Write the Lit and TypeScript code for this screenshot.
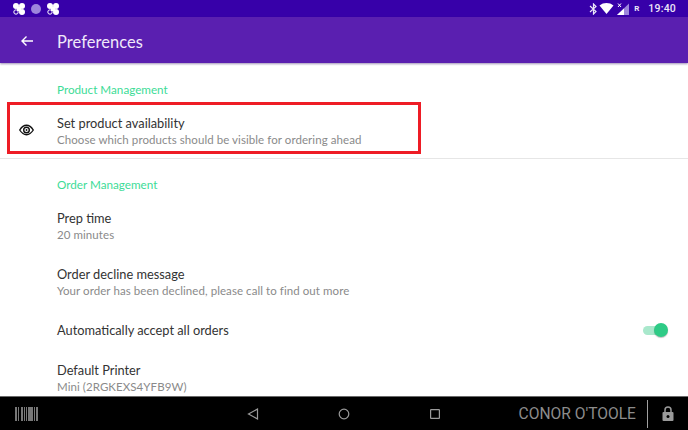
import { LitElement, html, css, svg } from 'lit';
import { customElement } from 'lit/decorators.js';

const clover = svg`<g fill="#fff"><circle cx="4" cy="4" r="3"/><circle cx="10" cy="4" r="3"/><circle cx="10" cy="10" r="3"/><circle cx="4" cy="10" r="2.2" fill="none" stroke="#fff" stroke-width="1"/><rect x="5" y="5" width="4" height="4"/></g>`;

@customElement('app-root')
export class AppRoot extends LitElement {
  static styles = css`
    :host {
      display: block;
      width: 688px;
      height: 430px;
      font-family: Lato, "Noto Sans", sans-serif;
      overflow: hidden;
      background: #fff;
    }
    .page { display: flex; flex-direction: column; height: 430px; }

    .status {
      height: 17px;
      background: #3700a9;
      display: flex;
      align-items: center;
      padding: 0 12px;
      color: #ece6f8;
      flex: none;
    }
    .status-left { display: flex; align-items: center; gap: 4px; flex: 1; }
    .status-right { display: flex; align-items: center; }
    .clock { font: 500 10.5px Roboto, sans-serif; margin-left: 9px; letter-spacing: 0.2px; }
    .roam { font: 700 8px Roboto, sans-serif; margin-left: 5px; }

    .toolbar {
      height: 46px;
      background: #5a1fb0;
      display: flex;
      align-items: center;
      flex: none;
      box-shadow: 0 1px 2px rgba(40, 10, 90, 0.45);
      position: relative;
      color: #f0e9fa;
      padding-top: 2px;
      box-sizing: border-box;
    }
    .back { width: 57px; display: flex; justify-content: center; padding-right: 4px; box-sizing: border-box; flex: none; }
    .title { font-size: 16.4px; letter-spacing: 0.1px; }

    .content { flex: 1; overflow: hidden; position: relative; min-height: 0; }
    .header {
      height: 39px;
      padding: 11px 0 0 57px;
      box-sizing: border-box;
      display: flex;
      align-items: center;
      color: #3ddc97;
      font-size: 11.7px;
    }
    .header.first { height: 41px; }
    .row {
      display: flex;
      align-items: center;
      height: 56px;
      box-sizing: border-box;
      flex: none;
    }
    .row.short { height: 40px; }
    .row.top { height: 54px; }
    .row-icon { width: 57px; display: flex; justify-content: center; padding: 0 5px 2px 0; box-sizing: border-box; flex: none; }
    .row-text { flex: 1; display: flex; flex-direction: column; gap: 2px; }
    .name { font-size: 12.8px; color: #333; line-height: 16px; }
    .desc { font-size: 11.5px; color: #8a8a8a; line-height: 14px; letter-spacing: 0.07px; }
    .divider { height: 1px; background: #e6e6e6; }

    .toggle { position: relative; width: 26px; height: 14px; margin-right: 20px; flex: none; }
    .track { position: absolute; left: 1px; top: 3px; width: 22px; height: 9px; border-radius: 5px; background: #a9e8cc; }
    .thumb { position: absolute; right: 0; top: 0; width: 14px; height: 14px; border-radius: 50%; background: #2ecb86; box-shadow: 0 1px 1px rgba(0,0,0,.25); }

    .highlight {
      position: absolute;
      left: 7px;
      top: 39px;
      width: 414px;
      height: 52px;
      box-sizing: border-box;
      border: 3px solid #ee1c25;
      pointer-events: none;
    }

    .nav {
      height: 34px;
      background: #000;
      flex: none;
      display: flex;
      align-items: center;
      border-top: 1px solid #6a6a6a;
      box-sizing: border-box;
      position: relative;
      color: #8c8c8c;
    }
    .barcode { margin-left: 15px; width: 228px; flex: none; display: flex; }
    .softkeys { display: flex; align-items: center; gap: 71px; flex: none; width: 260px; }
    .user { flex: 1; font: 400 15.6px Roboto, sans-serif; text-align: right; white-space: nowrap; }
    .sep { width: 1px; height: 28px; background: #a0a0a0; margin: 0 14px 0 11px; flex: none; }
    .lock { margin-right: 14px; display: flex; }
  `;

  render() {
    return html`
      <div class="page">
        <div class="status">
          <div class="status-left">
            <svg width="14" height="14" viewBox="0 0 14 14">${clover}</svg>
            <svg width="12" height="14" viewBox="0 0 12 14"><circle cx="6" cy="7" r="5" fill="#9d86dc"/></svg>
            <svg width="14" height="14" viewBox="0 0 14 14">${clover}</svg>
          </div>
          <div class="status-right">
            <svg width="9" height="12" viewBox="0 0 9 12" fill="none" stroke="#ece6f8" stroke-width="1.2"><path d="M1 3l6 5.500L4.500 11V1L7 3.500 1 9"/></svg>
            <svg width="15" height="11" viewBox="0 0 15 11" style="margin-left:1px"><path d="M0.500 2.500C4.500-0.800 10.500-0.800 14.500 2.500L7.500 11z" fill="#fff"/></svg>
            <svg width="12" height="12" viewBox="0 0 12 12" style="margin-left:3px"><path d="M12 0.500V12H0z" fill="#9d86dc"/><path d="M7 5.500V12H0z" fill="#fff"/><path d="M1 0.500l3 3.500M4 0.500l-3 3.500" stroke="#fff" stroke-width="1"/></svg>
            <span class="roam">R</span>
            <span class="clock">19:40</span>
          </div>
        </div>

        <div class="toolbar">
          <div class="back">
            <svg width="12" height="10" viewBox="0 0 12 10" fill="none" stroke="#fff" stroke-width="1.400"><path d="M12 5H1.500M5.500 0.500 1 5l4.500 4.500"/></svg>
          </div>
          <div class="title">Preferences</div>
        </div>

        <div class="content">
          <div class="header first">Product Management</div>
          <div class="row top">
            <div class="row-icon">
              <svg width="15" height="12" viewBox="0 0 16 12" fill="none" stroke="#111" stroke-width="1.500">
                <path d="M0.800 6C3 2.500 5.500 1 8 1s5 1.500 7.200 5C13 9.500 10.500 11 8 11S3 9.500 0.800 6z"/>
                <circle cx="8" cy="6" r="3"/>
                <circle cx="8" cy="6" r="1" fill="#111" stroke="none"/>
              </svg>
            </div>
            <div class="row-text">
              <div class="name">Set product availability</div>
              <div class="desc">Choose which products should be visible for ordering ahead</div>
            </div>
          </div>
          <div class="divider"></div>
          <div class="header">Order Management</div>
          ${this.textRow('Prep time', '20 minutes')}
          ${this.textRow('Order decline message', 'Your order has been declined, please call to find out more')}
          <div class="row short">
            <div class="row-icon"></div>
            <div class="row-text"><div class="name">Automatically accept all orders</div></div>
            <div class="toggle"><div class="track"></div><div class="thumb"></div></div>
          </div>
          ${this.textRow('Default Printer', 'Mini (2RGKEXS4YFB9W)')}
          <div class="highlight"></div>
        </div>

        <div class="nav">
          <div class="barcode">
            <svg width="23" height="14" viewBox="0 0 23 14" fill="#777">
              <rect x="0" width="2" height="14"/><rect x="3" width="1" height="14"/><rect x="6" width="2" height="14"/>
              <rect x="9" width="1" height="14"/><rect x="11" width="1" height="14"/><rect x="13" width="5" height="14"/>
              <rect x="19" width="1" height="14"/><rect x="21" width="2" height="14"/>
            </svg>
          </div>
          <div class="softkeys">
            <svg width="20" height="14" viewBox="0 0 20 14" fill="none" stroke="#9a9a9a" stroke-width="1.200"><path d="M14.500 2v10L5.500 7z"/></svg>
            <svg width="20" height="14" viewBox="0 0 20 14" fill="none" stroke="#9a9a9a" stroke-width="1.200"><circle cx="10" cy="7" r="4.800"/></svg>
            <svg width="20" height="14" viewBox="0 0 20 14" fill="none" stroke="#9a9a9a" stroke-width="1.200"><rect x="5.600" y="2.600" width="8.800" height="8.800" rx="0.500"/></svg>
          </div>
          <div class="user">CONOR O'TOOLE</div>
          <div class="sep"></div>
          <div class="lock">
            <svg width="12" height="15" viewBox="0 0 12 15"><path d="M3 6V4a3 3 0 0 1 6 0v2" fill="none" stroke="#9a9a9a" stroke-width="1.500"/><rect x="0.500" y="6" width="11" height="9" rx="1" fill="#9a9a9a"/><circle cx="6" cy="10.500" r="1.500" fill="#000"/></svg>
          </div>
        </div>
      </div>
    `;
  }

  textRow(name: string, desc: string) {
    return html`
      <div class="row">
        <div class="row-icon"></div>
        <div class="row-text">
          <div class="name">${name}</div>
          <div class="desc">${desc}</div>
        </div>
      </div>
    `;
  }
}
